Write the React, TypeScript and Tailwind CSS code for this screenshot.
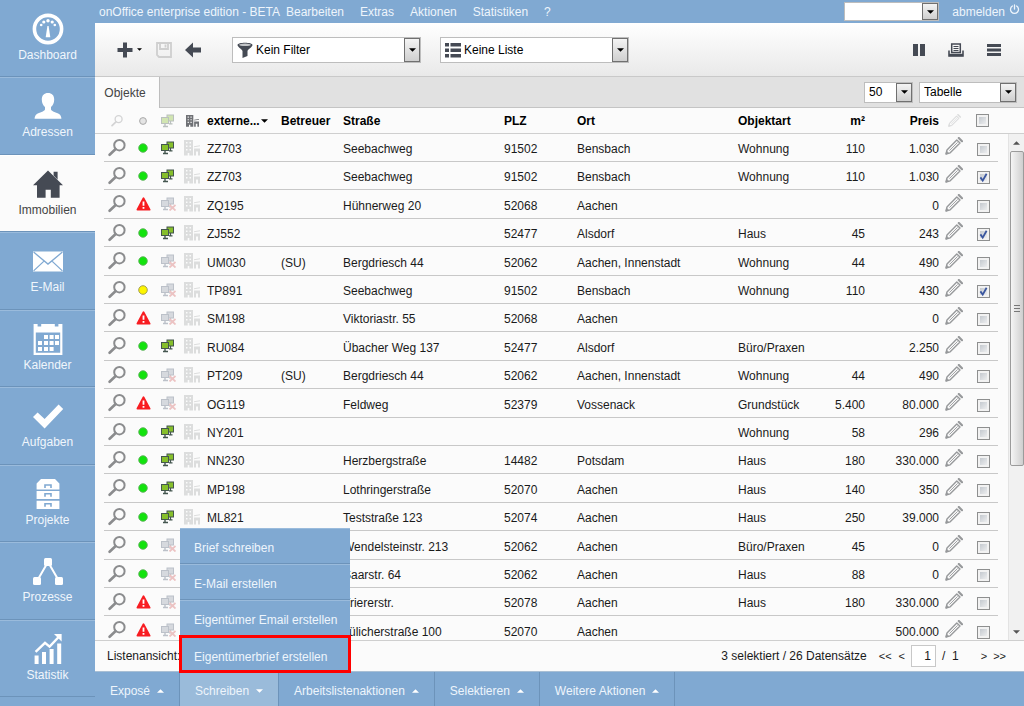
import type { ReactNode } from 'react';

type Status = 'green' | 'yellow' | 'alert';

interface Estate {
  status: Status;
  online: boolean;
  id: string;
  agent?: string;
  street?: string;
  zip: string;
  city: string;
  kind?: string;
  area?: string;
  price: string;
  checked?: boolean;
}

const estates: Estate[] = [
  { status: 'green', online: true, id: 'ZZ703', street: 'Seebachweg', zip: '91502', city: 'Bensbach', kind: 'Wohnung', area: '110', price: '1.030' },
  { status: 'green', online: true, id: 'ZZ703', street: 'Seebachweg', zip: '91502', city: 'Bensbach', kind: 'Wohnung', area: '110', price: '1.030', checked: true },
  { status: 'alert', online: false, id: 'ZQ195', street: 'Hühnerweg 20', zip: '52068', city: 'Aachen', price: '0' },
  { status: 'green', online: true, id: 'ZJ552', zip: '52477', city: 'Alsdorf', kind: 'Haus', area: '45', price: '243', checked: true },
  { status: 'green', online: false, id: 'UM030', agent: '(SU)', street: 'Bergdriesch 44', zip: '52062', city: 'Aachen, Innenstadt', kind: 'Wohnung', area: '44', price: '490' },
  { status: 'yellow', online: false, id: 'TP891', street: 'Seebachweg', zip: '91502', city: 'Bensbach', kind: 'Wohnung', area: '110', price: '430', checked: true },
  { status: 'alert', online: false, id: 'SM198', street: 'Viktoriastr. 55', zip: '52068', city: 'Aachen', price: '0' },
  { status: 'green', online: true, id: 'RU084', street: 'Übacher Weg 137', zip: '52477', city: 'Alsdorf', kind: 'Büro/Praxen', price: '2.250' },
  { status: 'green', online: false, id: 'PT209', agent: '(SU)', street: 'Bergdriesch 44', zip: '52062', city: 'Aachen, Innenstadt', kind: 'Wohnung', area: '44', price: '490' },
  { status: 'alert', online: false, id: 'OG119', street: 'Feldweg', zip: '52379', city: 'Vossenack', kind: 'Grundstück', area: '5.400', price: '80.000' },
  { status: 'green', online: true, id: 'NY201', zip: '', city: '', kind: 'Wohnung', area: '58', price: '296' },
  { status: 'green', online: true, id: 'NN230', street: 'Herzbergstraße', zip: '14482', city: 'Potsdam', kind: 'Haus', area: '180', price: '330.000' },
  { status: 'green', online: true, id: 'MP198', street: 'Lothringerstraße', zip: '52070', city: 'Aachen', kind: 'Haus', area: '140', price: '350' },
  { status: 'green', online: true, id: 'ML821', street: 'Teststraße 123', zip: '52074', city: 'Aachen', kind: 'Haus', area: '250', price: '39.000' },
  { status: 'green', online: false, id: '', street: 'Wendelsteinstr. 213', zip: '52062', city: 'Aachen', kind: 'Büro/Praxen', area: '45', price: '0' },
  { status: 'green', online: false, id: '', street: 'Saarstr. 64', zip: '52062', city: 'Aachen', kind: 'Haus', area: '88', price: '0' },
  { status: 'alert', online: false, id: '', street: 'Triererstr.', zip: '52078', city: 'Aachen', kind: 'Haus', area: '180', price: '330.000' },
  { status: 'alert', online: false, id: '', street: 'Jülicherstraße 100', zip: '52070', city: 'Aachen', price: '500.000' },
];

function Magnifier({ small }: { small?: boolean }) {
  return (
    <svg className={small ? 'mx-auto block size-3 opacity-35' : 'mx-auto block size-[18px]'} viewBox="0 0 18 18" fill="none" stroke="#8b8c8e">
      <circle cx="11.4" cy="6.2" r="5.2" strokeWidth="2" />
      <path d="M7.4 10.2 1.6 15.8" strokeWidth="2.6" strokeLinecap="round" />
    </svg>
  );
}

function StatusIcon({ status }: { status: Status }) {
  if (status === 'alert') {
    return (
      <svg className="mx-auto block h-[14px] w-[15px]" viewBox="0 0 15 14">
        <path d="M7.5 1.2 13.6 12.6H1.4Z" fill="#f81d22" stroke="#f81d22" strokeWidth="1.8" strokeLinejoin="round" />
        <path d="M6.6 4.4h1.8v4.4H6.6ZM6.6 10h1.8v1.7H6.6Z" fill="#fff" />
      </svg>
    );
  }
  return (
    <svg className="mx-auto block size-[10px]" viewBox="0 0 10 10">
      <circle cx="5" cy="5" r="4.3" fill={status === 'green' ? '#12e30d' : '#fdf500'} stroke={status === 'green' ? '#62b25f' : '#9b9650'} strokeWidth="0.9" />
    </svg>
  );
}

function Monitors({ off, faded }: { off?: boolean; faded?: boolean }) {
  const fill = off ? '#d6d9de' : '#86bf2b';
  const line = off ? '#bcc1c9' : '#44564f';
  return (
    <svg className={faded ? 'mx-auto block h-[14px] w-4 opacity-35' : 'mx-auto block h-[14px] w-4'} viewBox="0 0 16 14">
      <rect x="7" y="1" width="6.500" height="6" fill={fill} stroke={line} />
      <path d="M10.500 7v2.500M9 9.800h3.500" stroke={line} strokeWidth="1.200" />
      <rect x="1.500" y="3.500" width="7" height="6" fill={fill} stroke={line} />
      <path d="M5 9.500V12M3 12.500h5" stroke={line} strokeWidth="1.400" />
      {off && <path d="m9.500 8 6 5.500m0-5.500-6 5.500" stroke="#ecc3c3" strokeWidth="1.800" />}
    </svg>
  );
}

function Building({ dark }: { dark?: boolean }) {
  return (
    <svg className={dark ? 'mx-auto block h-3 w-[13px]' : 'block size-4'} viewBox="0 0 16 16" preserveAspectRatio="none" fill={dark ? '#6f7175' : '#dcdddd'}>
      <path fillRule="evenodd" d="M0 0h9v15.500H5.300v-2.500H3.700v2.500H0ZM2 2v1.500h1.500V2Zm3.500 0v1.500H7V2ZM2 5.500V7h1.500V5.500Zm3.500 0V7H7V5.500ZM2 9v1.500h1.500V9Zm3.500 0v1.500H7V9Z" />
      <path d="M10 6.300 16 5.300v1L10 7.300ZM10 8.500h6v7h-2v-4h-2v4h-2Z" />
    </svg>
  );
}

function Pencil({ small }: { small?: boolean }) {
  return (
    <svg className={small ? 'mx-auto block size-[13px] opacity-30' : 'mx-auto block size-[18px]'} viewBox="0 0 18 18" fill="none" stroke="#97999b" strokeLinejoin="round">
      <path d="m1 17 1-4L11.800 3l3.200 3L5.200 15.800Z" strokeWidth="1.400" />
      <path d="M4.400 13.600 12.600 5.400" strokeWidth="0.900" />
      <path d="m13.800 1 3.200 3.200" strokeWidth="2.200" strokeLinecap="round" />
      <path d="m1 17 .7-2.600 1.800 1.800Z" fill="#97999b" />
    </svg>
  );
}

function Caret({ down, className }: { down?: boolean; className: string }) {
  return (
    <svg className={className} viewBox="0 0 8 4" fill="currentColor">
      <path d={down ? 'M0 0h8L4 4Z' : 'M0 4h8L4 0Z'} />
    </svg>
  );
}

function Checkbox({ label, checked }: { label: string; checked?: boolean }) {
  return (
    <label className="mx-auto grid size-[13px]">
      <input
        type="checkbox"
        aria-label={label}
        defaultChecked={checked}
        className="peer col-start-1 row-start-1 size-[13px] appearance-none border border-[#8e8f8f] bg-linear-to-br from-[#b9bfc6] to-[#f8f8f8] shadow-[inset_0_0_0_2px_#f2f2f2]"
      />
      <svg className="pointer-events-none col-start-1 row-start-1 hidden size-[13px] peer-checked:block" viewBox="0 0 13 13" fill="none">
        <path d="m3.4 6.4 2.3 3.2 3.900-6.800" stroke="#3a569f" strokeWidth="1.800" />
      </svg>
    </label>
  );
}

function Dropdown({ label, value, className, icon, inset }: { label: string; value: string; className: string; icon?: ReactNode; inset: string }) {
  return (
    <div className={`relative flex items-center border border-[#bdbdbd] bg-white text-black ${className}`}>
      {icon}
      <select aria-label={label} defaultValue={value} className={`h-full w-full appearance-none bg-transparent outline-none ${inset}`}>
        <option>{value}</option>
      </select>
      <span className="pointer-events-none absolute inset-y-0 right-0 flex w-4 items-center justify-center border border-[#707070] bg-linear-to-b from-[#f4f4f4] to-[#cfcfcf]">
        <Caret down className="h-1 w-[7px]" />
      </span>
    </div>
  );
}

const navigation: { label: string; icon: ReactNode }[] = [
  {
    label: 'Dashboard',
    icon: (
      <>
        <circle cx="16" cy="16" r="13.6" fill="none" stroke="currentColor" strokeWidth="3.6" />
        <path d="M15.400 13h1.200l1.700 11.200h-4.600Z" />
        <circle cx="16" cy="7.800" r="1.700" />
        <circle cx="11.800" cy="9" r="1.600" />
        <circle cx="20.200" cy="9" r="1.600" />
        <circle cx="9.200" cy="12" r="1.300" />
        <circle cx="22.800" cy="12" r="1.300" />
      </>
    ),
  },
  {
    label: 'Adressen',
    icon: <path d="M16 3c3.800 0 6.200 2.400 6.200 6.400 0 3.400-1.400 6-3.200 7.600v2.400c.6 2.200 5.600 2.600 8.400 4.800 1.200 1 2 2.600 2 4.600H2.600c0-2 .8-3.600 2-4.600 2.800-2.200 7.800-2.600 8.400-4.800V17c-1.800-1.600-3.200-4.200-3.200-7.600C9.800 5.400 12.200 3 16 3Z" />,
  },
  {
    label: 'Immobilien',
    icon: <path d="M16 2.500 31 17.200h-3.400v12.600H18.800v-8h-5.200v8H5V17.200H1L16 2.500ZM21.600 3.800h4v7.600l-4-4Z" />,
  },
  {
    label: 'E-Mail',
    icon: (
      <>
        <path d="M1 6.500h30v20H1Z" />
        <path d="m1.600 7.100 14.400 12 14.400-12M1.600 25.900 12 16.100M30.400 25.900 20 16.100" fill="none" stroke="#80a9d2" strokeWidth="1.300" />
      </>
    ),
  },
  {
    label: 'Kalender',
    icon: (
      <>
        <path fillRule="evenodd" d="M1.600 1h4v2.400h3.600V1h13.600v2.400h3.600V1h4v31H1.600ZM3.800 9.400v20.400h24.400V9.400Z" />
        <path d="M12 12h4v4h-4Zm5.600 0h4v4h-4Zm5.400 0h4v4h-4ZM6 18h4v4H6Zm6 0h4v4h-4Zm5.600 0h4v4h-4Zm5.400 0h4v4h-4ZM6 24h4v4H6Zm6 0h4v4h-4Zm5.600 0h4v4h-4Z" />
      </>
    ),
  },
  {
    label: 'Aufgaben',
    icon: <path d="m1 17 4.600-4.600 7 6.600L26.600 4.400 31.200 9 12.600 28.400Z" />,
  },
  {
    label: 'Projekte',
    icon: (
      <>
        <path d="M9 1h14l4.400 4.400v6H4.600v-6ZM4.600 13h22.800v8H4.600ZM4.600 22.800h22.800V31H4.600Z" />
        <path d="M13 10V7h6v3M13 18.800v-3h6v3M13 28.800v-3h6v3" fill="none" stroke="#80a9d2" strokeWidth="1.600" />
      </>
    ),
  },
  {
    label: 'Prozesse',
    icon: (
      <>
        <path d="M16 7 5 26M16 7l11 19" fill="none" stroke="currentColor" strokeWidth="2" />
        <rect x="12" y="3" width="8" height="8" rx="1.500" />
        <rect x="1" y="22" width="8" height="8" rx="1.500" />
        <rect x="23" y="22" width="8" height="8" rx="1.500" />
      </>
    ),
  },
  {
    label: 'Statistik',
    icon: (
      <>
        <path d="M2.600 22.600h4V31h-4ZM10 19h4v12h-4ZM17.600 16h4v15h-4ZM25.200 10.600h4V31h-4Z" />
        <path d="m3.600 18.800 9.400-9 4.600 3.800L27.600 3" fill="none" stroke="currentColor" strokeWidth="2.400" />
        <path d="M22 1h7.600v7.600Z" />
      </>
    ),
  },
];

const menuBar = ['onOffice enterprise edition - BETA', 'Bearbeiten', 'Extras', 'Aktionen', 'Statistiken', '?'];
const letterMenu = ['Brief schreiben', 'E-Mail erstellen', 'Eigentümer Email erstellen', 'Eigentümerbrief erstellen'];
const footerActions = ['Exposé', 'Schreiben', 'Arbeitslistenaktionen', 'Selektieren', 'Weitere Aktionen'];

function Sidebar() {
  return (
    <nav className="w-[95px] shrink-0 overflow-hidden bg-[#80a9d2]">
      <ul>
        {navigation.map(({ label, icon }, i) => {
          const active = label === 'Immobilien';
          const edge = i === 0 ? 'border-transparent' : 'border-[#9abbdc]';
          return (
            <li key={label} className="border-b border-[#6c93ba] odd:h-[77px] even:h-[78px]">
              <a
                href={`#${label}`}
                className={`flex h-full flex-col items-center border-t pt-3 leading-4 ${active ? 'border-white bg-[#fbfbfb] text-[#454a54]' : `${edge} text-white`}`}
              >
                <svg className="mb-[2px] size-8" viewBox="0 0 32 32" fill="currentColor">
                  {icon}
                </svg>
                <span className={active ? 'text-[#444444]' : 'text-[#f0f6fc]'}>{label}</span>
              </a>
            </li>
          );
        })}
      </ul>
    </nav>
  );
}

function MenuBar() {
  return (
    <header className="flex h-[23px] shrink-0 items-center bg-[#80a9d2] px-1 text-[#eef5fc]">
      <nav className="flex flex-1 gap-4">
        {menuBar.map((entry, i) => (
          <a key={entry} href="#menu" className={i === 0 ? '-mr-[10px]' : ''}>
            {entry}
          </a>
        ))}
      </nav>
      <Dropdown label="Schnellsuche" value="" className="mr-[13px] h-[19px] w-[95px]" inset="px-1" />
      <a href="#abmelden" className="flex items-center gap-1">
        abmelden
        <svg className="mb-1 size-[11px]" viewBox="0 0 11 11" fill="none" stroke="currentColor" strokeWidth="1.300" strokeLinecap="round">
          <path d="M5.500 1v4M3.400 2a4 4 0 1 0 4.200 0" />
        </svg>
      </a>
    </header>
  );
}

function Toolbar() {
  return (
    <div className="flex h-[54px] shrink-0 items-center border-b border-[#c9c9c9] bg-linear-to-b from-white to-[#e9e9e9] px-[22px] text-[#454a54]">
      <button type="button" aria-label="Neu" className="flex items-center gap-1">
        <svg className="size-4" viewBox="0 0 16 16" fill="currentColor">
          <path d="M6 .500h4V6h5.500v4H10v5.500H6V10H.500V6H6Z" />
        </svg>
        <Caret down className="h-[3px] w-[5px] text-black" />
      </button>
      <button type="button" aria-label="Speichern" className="ml-[14px] text-[#cfcfcf]">
        <svg className="block size-4" viewBox="0 0 16 16" fill="none" stroke="currentColor" strokeWidth="1.800">
          <path d="M1 1h14v14H3L1 13ZM4 1v6h8V1M9.500 2.500v3" />
        </svg>
      </button>
      <button type="button" aria-label="Zurück" className="ml-[13px]">
        <svg className="block size-4" viewBox="0 0 16 16" fill="currentColor">
          <path d="M0 8 8 .500v5h8v5H8v5Z" />
        </svg>
      </button>
      <Dropdown
        label="Filter"
        value="Kein Filter"
        className="ml-[31px] h-[26px] w-[189px]"
        inset="pl-[3px]"
        icon={
          <svg className="ml-1 size-4 shrink-0" viewBox="0 0 16 16">
            <path d="M.500 3c0-3 15-3 15 0 0 2-5 4.500-5 6v5l-5 2V9c0-1.500-5-4-5-6Z" fill="#454a54" />
            <ellipse cx="8" cy="2.800" rx="6" ry="1.300" fill="#c4c6c9" />
          </svg>
        }
      />
      <Dropdown
        label="Liste"
        value="Keine Liste"
        className="ml-[19px] h-[26px] w-[189px]"
        inset="pl-[3px]"
        icon={
          <svg className="ml-1 size-4 shrink-0" viewBox="0 0 16 16" fill="#454a54">
            <path d="M0 1h4v3.500H0ZM5.500 1H16v3.500H5.500ZM0 6.500h4V10H0ZM5.500 6.500H16V10H5.500ZM0 12h4v3.500H0ZM5.500 12H16v3.500H5.500Z" />
          </svg>
        }
      />
      <div className="ml-auto flex items-center gap-[22px]">
        <button type="button" aria-label="Spalten">
          <svg className="block h-4 w-[14px]" viewBox="0 0 14 16" fill="currentColor">
            <path d="M1 2h5v12H1ZM8 2h5v12H8Z" />
          </svg>
        </button>
        <button type="button" aria-label="Drucken">
          <svg className="block size-4" viewBox="0 0 16 16" fill="none" stroke="currentColor">
            <path d="M3.700 2h8.600v8.500H3.700Z" strokeWidth="1.500" />
            <path d="M5.500 4.500h5M5.500 6.500h5M5.500 8.500h5" />
            <path d="M1 8.500V14h14V8.500" strokeWidth="1.600" />
            <path d="M1 13h14" strokeWidth="2.400" />
          </svg>
        </button>
        <button type="button" aria-label="Menü">
          <svg className="block size-4" viewBox="0 0 16 16" fill="currentColor">
            <path d="M1 2h14v3H1ZM1 6.500h14v3H1ZM1 11h14v3H1Z" />
          </svg>
        </button>
      </div>
    </div>
  );
}

function TabBar() {
  return (
    <div className="flex h-[31px] shrink-0 bg-[#e1e1e1]">
      <button type="button" className="w-[65px] border-r border-[#bdbdbd] bg-[#fbfbfb] pr-1 text-[#444444]">
        Objekte
      </button>
      <div className="flex flex-1 items-center justify-end gap-[6px] border-b border-[#c4c4c4] pr-[7px]">
        <Dropdown label="Einträge pro Seite" value="50" className="h-[21px] w-[49px]" inset="pl-1" />
        <Dropdown label="Ansicht" value="Tabelle" className="h-[21px] w-[98px]" inset="pl-1" />
      </div>
    </div>
  );
}

function Scrollbar() {
  return (
    <div aria-hidden="true" className="absolute top-[26px] right-0 bottom-0 flex w-4 flex-col items-center border-l border-[#e3e3e3] bg-[#f1f1f1] text-[#555555]">
      <div className="flex h-[17px] items-center">
        <Caret className="h-1 w-[7px]" />
      </div>
      <div className="flex h-[315px] w-[14px] flex-col items-center justify-center gap-[2px] rounded-xs border border-[#9b9b9b] bg-linear-to-r from-[#f5f5f5] to-[#cfcfcf]">
        <span className="h-px w-[6px] bg-[#777777]" />
        <span className="h-px w-[6px] bg-[#777777]" />
        <span className="h-px w-[6px] bg-[#777777]" />
      </div>
      <div className="mt-auto flex h-[17px] items-center">
        <Caret down className="h-1 w-[7px]" />
      </div>
    </div>
  );
}

function EstateTable() {
  const line = 'border-b border-[#c8c8c8] p-0';
  const text = `${line} whitespace-nowrap px-[2px] pt-[3px]`;
  return (
    <div className="relative min-h-0 flex-1 overflow-hidden">
      <table className="w-full table-fixed border-separate border-spacing-0">
        <colgroup>
          <col className="w-[9px]" />
          <col className="w-[26px]" />
          <col className="w-[26px]" />
          <col className="w-[24px]" />
          <col className="w-[25px]" />
          <col className="w-[74px]" />
          <col className="w-[62px]" />
          <col />
          <col className="w-[73px]" />
          <col />
          <col className="w-[74px]" />
          <col className="w-[57px]" />
          <col className="w-[74px]" />
          <col className="w-[26px]" />
          <col className="w-[31px]" />
          <col className="w-[26px]" />
        </colgroup>
        <thead>
          <tr className="h-[26px] text-left text-black [&>th]:border-b [&>th]:border-[#cfcfcf] [&>th]:px-[2px] [&>th]:py-0">
            <th />
            <th><Magnifier small /></th>
            <th>
              <svg className="mx-auto block size-2" viewBox="0 0 8 8">
                <circle cx="4" cy="4" r="3.400" fill="#e4e4e4" stroke="#a8a8a8" />
              </svg>
            </th>
            <th><Monitors faded /></th>
            <th><Building dark /></th>
            <th>
              <button type="button" className="flex items-center gap-px font-bold">
                externe...
                <Caret down className="h-1 w-[7px]" />
              </button>
            </th>
            <th>Betreuer</th>
            <th>Straße</th>
            <th>PLZ</th>
            <th>Ort</th>
            <th>Objektart</th>
            <th className="text-right">m²</th>
            <th className="text-right">Preis</th>
            <th><Pencil small /></th>
            <th><Checkbox label="Alle auswählen" /></th>
            <th />
          </tr>
        </thead>
        <tbody>
          {estates.map((estate, i) => (
            <tr key={i} className="h-7 nth-[5n]:h-[29px] nth-[5n+3]:h-[29px]">
              <td className="p-0" />
              <td className={line}><Magnifier /></td>
              <td className={line}><StatusIcon status={estate.status} /></td>
              <td className={line}><Monitors off={!estate.online} /></td>
              <td className={`${line} pl-1`}><Building /></td>
              <td className={text}>{estate.id}</td>
              <td className={text}>{estate.agent}</td>
              <td className={text}>{estate.street}</td>
              <td className={text}>{estate.zip}</td>
              <td className={text}>{estate.city}</td>
              <td className={text}>{estate.kind}</td>
              <td className={`${text} text-right`}>{estate.area}</td>
              <td className={`${text} text-right`}>{estate.price}</td>
              <td className={`${line} pb-[3px]`}><Pencil /></td>
              <td className={`${line} pt-1 pl-px`}><Checkbox label={`Zeile ${i + 1} auswählen`} checked={estate.checked} /></td>
              <td className="p-0" />
            </tr>
          ))}
        </tbody>
      </table>
      <Scrollbar />
    </div>
  );
}

function Pager() {
  return (
    <div className="flex h-[31px] shrink-0 items-center border-t border-[#cfcfcf] bg-[#fbfbfb] pr-[18px] pl-3">
      <span>Listenansicht:</span>
      <span className="ml-auto">3 selektiert / 26 Datensätze</span>
      <button type="button" className="ml-3 text-[11px]">&lt;&lt;</button>
      <button type="button" className="ml-[7px] text-[11px]">&lt;</button>
      <input aria-label="Seite" defaultValue="1" className="ml-[6px] h-[22px] w-[25px] border border-[#c8c8c8] bg-white pr-1 text-right" />
      <span className="ml-[6px]">/&nbsp; 1</span>
      <button type="button" className="ml-[22px] text-[11px]">&gt;</button>
      <button type="button" className="ml-[6px] text-[11px]">&gt;&gt;</button>
    </div>
  );
}

function ActionBar() {
  return (
    <footer className="flex h-[35px] shrink-0 border-t border-[#a9bfd4] bg-[#80a9d2] text-[#eef5fc]">
      {footerActions.map((action) => {
        const open = action === 'Schreiben';
        return (
          <div key={action} className="relative">
            <button
              type="button"
              aria-expanded={open}
              className={`flex h-full items-center gap-[7px] border-r border-[#6c93ba] px-[15px] pt-1 ${open ? 'bg-[#9abbda]' : ''}`}
            >
              {action}
              <Caret down={open} className="h-1 w-[7px] text-white" />
            </button>
            {open && (
              <ul className="absolute bottom-full left-0 w-[170px] bg-[#80a9d2]">
                {letterMenu.map((entry) => (
                  <li key={entry} className="h-9 border-t border-[#9abbdc] not-last:border-b not-last:border-b-[#6c93ba] last:outline-3 last:-outline-offset-2 last:outline-[#ff0000]">
                    <button type="button" className="flex h-full w-full items-center px-[14px] pt-1 whitespace-nowrap">
                      {entry}
                    </button>
                  </li>
                ))}
              </ul>
            )}
          </div>
        );
      })}
    </footer>
  );
}

export default function App() {
  return (
    <div className="flex h-screen bg-[#fbfbfb] font-['Liberation_Sans',Arial,sans-serif] text-[12px] leading-4 text-[#1a1a1a]">
      <Sidebar />
      <main className="flex min-w-0 flex-1 flex-col">
        <MenuBar />
        <Toolbar />
        <TabBar />
        <EstateTable />
        <Pager />
        <ActionBar />
      </main>
    </div>
  );
}
